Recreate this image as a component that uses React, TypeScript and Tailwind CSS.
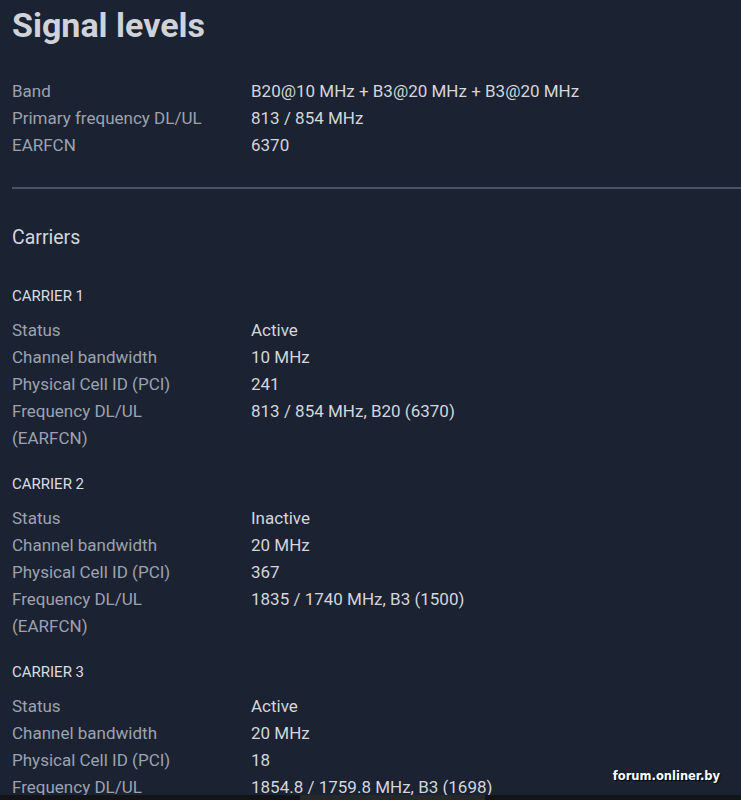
import React from "react";

interface Row {
  label: React.ReactNode;
  value: string;
}

const summary: Row[] = [
  { label: "Band", value: "B20@10 MHz + B3@20 MHz + B3@20 MHz" },
  { label: "Primary frequency DL/UL", value: "813 / 854 MHz" },
  { label: "EARFCN", value: "6370" },
];

const freqLabel = (
  <>
    Frequency DL/UL
    <br />
    (EARFCN)
  </>
);

const carriers: { name: string; rows: Row[] }[] = [
  {
    name: "CARRIER 1",
    rows: [
      { label: "Status", value: "Active" },
      { label: "Channel bandwidth", value: "10 MHz" },
      { label: "Physical Cell ID (PCI)", value: "241" },
      { label: freqLabel, value: "813 / 854 MHz, B20 (6370)" },
    ],
  },
  {
    name: "CARRIER 2",
    rows: [
      { label: "Status", value: "Inactive" },
      { label: "Channel bandwidth", value: "20 MHz" },
      { label: "Physical Cell ID (PCI)", value: "367" },
      { label: freqLabel, value: "1835 / 1740 MHz, B3 (1500)" },
    ],
  },
  {
    name: "CARRIER 3",
    rows: [
      { label: "Status", value: "Active" },
      { label: "Channel bandwidth", value: "20 MHz" },
      { label: "Physical Cell ID (PCI)", value: "18" },
      { label: freqLabel, value: "1854.8 / 1759.8 MHz, B3 (1698)" },
    ],
  },
];

const InfoTable: React.FC<{ rows: Row[] }> = ({ rows }) => (
  <div className="grid grid-cols-[239px_1fr] text-[17px] leading-[27px]">
    {rows.map((r, i) => (
      <React.Fragment key={i}>
        <div className="text-[#9ba3b0]">{r.label}</div>
        <div className="text-[#d3d6dc]">{r.value}</div>
      </React.Fragment>
    ))}
  </div>
);

export default function App() {
  return (
    <div
      className="relative flex h-[800px] w-[741px] flex-col overflow-hidden bg-[#1b2231]"
      style={{ fontFamily: "Roboto, 'Noto Sans', sans-serif" }}
    >
      <div className="min-h-0 flex-1 overflow-hidden pl-3 pt-[7px]">
        <h1 className="text-[34px] font-bold leading-[36px] text-[#cfd3d9]">Signal levels</h1>

        <div className="mt-[35px]">
          <InfoTable rows={summary} />
        </div>

        {/* divider runs to the right edge */}
        <div className="mt-[28px] h-[2px] bg-[#4a5263]" />

        <h2 className="mt-[35px] text-[19.5px] leading-[27px] text-[#d3d6dc]">Carriers</h2>

        <div className="mt-[35px] flex flex-col gap-[22px]">
          {carriers.map((c) => (
            <section key={c.name}>
              <h3 className="text-[15px] leading-[20px] text-[#dadde2]">{c.name}</h3>
              <div className="mt-[11px]">
                <InfoTable rows={c.rows} />
              </div>
            </section>
          ))}
        </div>
      </div>

      {/* bottom system bar */}
      <div className="flex h-[5px] shrink-0">
        <div className="w-[300px] bg-[#121419]" />
        <div className="w-[185px] bg-[#26282c]" />
        <div className="flex-1 bg-[#121419]" />
      </div>

      {/* watermark */}
      <div
        className="absolute right-[21px] top-[768px] text-[11.5px] font-bold text-white [text-shadow:1px_1px_1px_#000]"
        style={{ fontFamily: "'DejaVu Sans', Verdana, sans-serif" }}
      >
        forum.onliner.by
      </div>
    </div>
  );
}
